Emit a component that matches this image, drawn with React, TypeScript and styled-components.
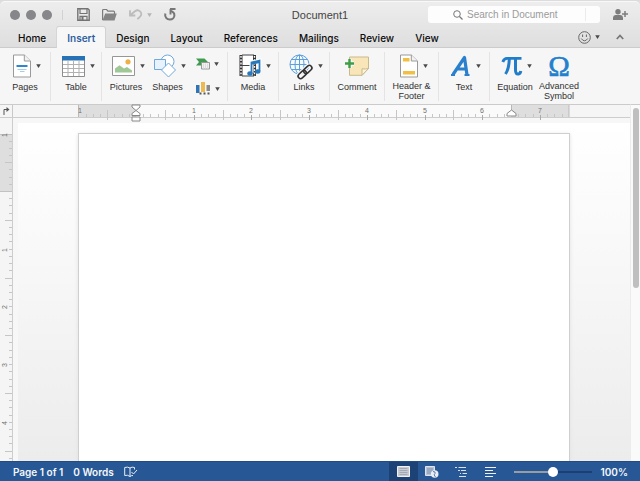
import React from "react";
import styled, { createGlobalStyle } from "styled-components";

const GlobalStyle = createGlobalStyle`
  * { box-sizing: border-box; }
  html, body { margin: 0; height: 100%; }
  body { font-family: "Liberation Sans", Arial, sans-serif; color: #222; background: #dedede; overflow: hidden; }
  button, input, textarea { font: inherit; color: inherit; margin: 0; padding: 0; border: 0; background: none; }
  button { cursor: pointer; }
  svg { display: block; flex: none; overflow: visible; }
`;

const Window = styled.div`
  display: flex;
  flex-direction: column;
  height: 100vh;
  border-top: 1px solid #dcdcdc;
`;

const Chrome = styled.header`
  flex: none;
  border-top: 1px solid #f8f8f8;
  border-radius: 5px 5px 0 0;
  background: linear-gradient(#ededed, #dedede);
`;

const TitleBar = styled.div`
  display: grid;
  grid-template-columns: 1fr auto 1fr;
  align-items: center;
  height: 25px;
`;

const TitleLeft = styled.div`
  display: flex;
  align-items: center;
  padding-left: 10px;
`;

const Lights = styled.div`
  display: flex;
  gap: 6px;
  padding-right: 10px;
  margin-right: 14px;
  border-right: 1px solid #d2d2d2;
`;

const Light = styled.button`
  width: 10px;
  height: 10px;
  border-radius: 50%;
  background: #87878b;
`;

const ToolRow = styled.div`
  display: flex;
  align-items: center;
  gap: 12px;
`;

const IconButton = styled.button`
  display: flex;
  align-items: center;
  gap: 4px;
`;

const DocTitle = styled.h1`
  margin: 0;
  font-size: 11px;
  line-height: 14px;
  font-weight: 400;
  color: #444;
`;

const TitleRight = styled.div`
  display: flex;
  align-items: center;
  justify-content: flex-end;
  gap: 13px;
  padding-right: 12px;
`;

const SearchBox = styled.label`
  display: flex;
  align-items: center;
  justify-content: center;
  gap: 4px;
  width: 172px;
  height: 17px;
  padding: 0 14px 0 25px;
  border-radius: 3px;
  background: #fdfdfd;
`;

const SearchInput = styled.input`
  flex: 1;
  min-width: 0;
  height: 13px;
  font-size: 10px;
  outline: none;
  border-right: 1px solid #ececec;
  &::placeholder { color: #9b9b9b; opacity: 1; }
`;

const TabBar = styled.nav`
  display: flex;
  height: 21px;
  padding: 0 16px 0 8px;
  gap: 1px;
  border-bottom: 1px solid #cccccc;
`;

const Tab = styled.button<{ $active?: boolean }>`
  height: 21px;
  padding: 0 10px;
  font-family: Inter, "Liberation Sans", sans-serif;
  font-size: 10px;
  font-weight: ${(p) => (p.$active ? 600 : 500)};
  color: ${(p) => (p.$active ? "#2f5f9f" : "#0c0c0c")};
  background: ${(p) => (p.$active ? "#f7f7f7" : "transparent")};
  box-shadow: ${(p) => (p.$active ? "0 0 0 1px #d2d2d2" : "none")};
  clip-path: ${(p) => (p.$active ? "inset(-1px -1px 0 -1px)" : "none")};
  border-radius: 2px 2px 0 0;
`;

const TabTools = styled.div`
  display: flex;
  align-items: center;
  gap: 16px;
  margin-left: auto;
`;

const Ribbon = styled.div`
  display: flex;
  flex: none;
  height: 56px;
  padding-top: 4px;
  background: #f6f6f6;
`;

const Group = styled.div<{ $width: number; $last?: boolean }>`
  display: flex;
  flex: none;
  justify-content: center;
  width: ${(p) => p.$width}px;
  height: 49px;
  border-right: ${(p) => (p.$last ? "0" : "1px solid #e4e4e4")};
`;

const RibbonButton = styled.button<{ $width: number }>`
  display: flex;
  flex-direction: column;
  align-items: center;
  flex: none;
  width: ${(p) => p.$width}px;
`;

const IconRow = styled.span<{ $caret?: boolean }>`
  display: grid;
  grid-template-columns: minmax(0, 1fr) auto minmax(0, 1fr);
  align-items: center;
  width: 100%;
  height: 28px;
  padding-right: ${(p) => (p.$caret ? 6 : 0)}px;
  & > :first-child { grid-column: 2; }
`;

const CaretSlot = styled.span`
  padding-left: 5px;
`;

const Label = styled.span`
  margin-top: 2px;
  font-size: 9px;
  line-height: 10px;
  color: #303030;
  text-align: center;
`;

const SmallColumn = styled.div`
  display: flex;
  flex-direction: column;
  gap: 12px;
  width: 36px;
  padding: 6px 0 0 8px;
`;

const Main = styled.main`
  display: flex;
  flex: 1;
  min-height: 0;
`;

const Editor = styled.div`
  display: flex;
  flex-direction: column;
  flex: 1;
  min-width: 0;
`;

const RulerRow = styled.div`
  display: flex;
  flex: none;
  height: 14px;
  border-top: 1px solid #cbcbcb;
  border-bottom: 1px solid #cdcdcd;
  background: #f5f5f5;
`;

const Corner = styled.button`
  display: flex;
  align-items: center;
  width: 13px;
  padding-left: 3px;
  border-right: 1px solid #c8c8c8;
`;

const HorizontalTrack = styled.div`
  display: flex;
  flex: 1;
  justify-content: center;
  padding-left: 5px;
  z-index: 1;
`;

const Body = styled.div`
  display: flex;
  flex: 1;
  min-height: 0;
`;

const VerticalTrack = styled.div`
  flex: none;
  width: 13px;
  overflow: hidden;
  border-right: 1px solid #cdcdcd;
  background: #f5f5f5;
`;

const Desk = styled.div`
  display: flex;
  flex: 1;
  min-width: 0;
  padding: 5px 0 0 5px;
  background: #f7f7f7;
`;

const DeskSurface = styled.div`
  display: flex;
  flex: 1;
  justify-content: center;
  min-width: 0;
  padding-top: 10px;
  overflow: hidden;
  background: linear-gradient(#ffffff, #fafafa 30%, #ececec);
`;

const Paper = styled.textarea`
  width: 492px;
  height: 100%;
  padding: 56px 58px;
  resize: none;
  outline: none;
  border: 1px solid #cfcfcf;
  border-bottom: 0;
  background: #fff;
  box-shadow: 0 1px 4px #e2e2e2;
`;

const ScrollTrack = styled.div`
  flex: none;
  width: 10px;
  padding: 3px 1px 0 2px;
  border-top: 1px solid #cbcbcb;
  border-left: 1px solid #ececec;
  background: #fafafa;
`;

const ScrollThumb = styled.div`
  height: 51%;
  width: 6px;
  border-radius: 3px;
  background: #bfbfbf;
`;

const StatusBar = styled.footer`
  display: flex;
  flex: none;
  align-items: center;
  height: 20px;
  padding: 0 12px 0 13px;
  border-top: 1px solid #1f4b86;
  font-family: Inter, "Liberation Sans", sans-serif;
  font-size: 10px;
  font-weight: 600;
  color: #f4f7fb;
  background: #275895;
`;

const StatusText = styled.button`
  margin-right: 10px;
`;

const Views = styled.div`
  display: flex;
  height: 100%;
  margin-left: auto;
`;

const ViewButton = styled.button<{ $active?: boolean }>`
  display: grid;
  place-items: center;
  width: 29px;
  background: ${(p) => (p.$active ? "#1d4275" : "transparent")};
`;

const Zoom = styled.input`
  width: 78px;
  height: 12px;
  margin: 0 9px 0 9px;
  appearance: none;
  &::-webkit-slider-runnable-track {
    height: 2px;
    background: linear-gradient(90deg, #9a9ca0 50%, #1b3f70 50%);
  }
  &::-webkit-slider-thumb {
    appearance: none;
    width: 10px;
    height: 10px;
    margin-top: -4px;
    border-radius: 50%;
    background: #fff;
  }
`;

const Caret = ({ color = "#4a4a4a" }: { color?: string }) => (
  <svg width="5" height="4" viewBox="0 0 5 4"><path d="M.2.200h4.600L2.500 4z" fill={color} /></svg>
);

const SaveIcon = () => (
  <svg width="13" height="13" viewBox="0 0 13 13">
    <path d="M.8.8h10l1.400 1.300v10.100H.8z" fill="none" stroke="#737373" strokeWidth="1.400" />
    <path d="M3 1v4.500h7V1M3 12V8.400h7V12" fill="none" stroke="#737373" strokeWidth="1.200" />
    <path d="M4.500 9h2v3h-2z" fill="#737373" />
  </svg>
);

const FolderIcon = () => (
  <svg width="15" height="12" viewBox="0 0 15 12">
    <path d="M.6 11V1.500q0-1 1-1h3l1.300 1.600h5.600q1 0 1 1V5" fill="none" stroke="#7b7b7b" strokeWidth="1.200" />
    <path d="M3.200 4.500h11.600L12.500 11.500H.5z" fill="#858585" />
  </svg>
);

const UndoIcon = () => (
  <svg width="14" height="11" viewBox="0 0 14 11">
    <path d="M1 1.200v5.300h5.300M1.400 6L6 2.200c3-2.200 6.300 0 6.300 2.800 0 2.300-1.800 3.500-4 5" fill="none" stroke="#bcbcbc" strokeWidth="1.800" />
  </svg>
);

const RedoIcon = () => (
  <svg width="12" height="13" viewBox="0 0 12 13">
    <path d="M1.300 5.500c-.8 3.500 1.500 6 4.500 6 2.800 0 4.600-2 4.600-4.300 0-2.200-1.600-3.600-3.800-4.200" fill="none" stroke="#777" strokeWidth="2" />
    <path d="M6 1h5.500M6.500 1v5.500" stroke="#777" strokeWidth="1.900" />
  </svg>
);

const SearchIcon = () => (
  <svg width="10" height="10" viewBox="0 0 10 10">
    <circle cx="4" cy="4" r="3.300" fill="none" stroke="#777" strokeWidth="1" />
    <path d="M6.500 6.500l3 3" stroke="#777" strokeWidth="1.200" />
  </svg>
);

const PersonIcon = () => (
  <svg width="15" height="11" viewBox="0 0 15 11">
    <circle cx="5" cy="2.800" r="2.700" fill="#7d7d7d" />
    <path d="M0 11V8.500Q0 6.200 2.500 6H7.500Q10 6.200 10 8.500V11z" fill="#7d7d7d" />
    <path d="M12 2v6M9 5h6" stroke="#7d7d7d" strokeWidth="1.500" />
  </svg>
);

const SmileIcon = () => (
  <svg width="13" height="13" viewBox="0 0 13 13">
    <circle cx="6.500" cy="6.500" r="5.800" fill="none" stroke="#666" />
    <path d="M4.600 3.500v2.500M8.400 3.500v2.500M3.200 7.500q3.300 4.600 6.600 0" fill="none" stroke="#666" />
  </svg>
);

const CollapseIcon = () => (
  <svg width="8" height="6" viewBox="0 0 8 6"><path d="M.8 5L4 1.500 7.200 5" fill="none" stroke="#777" strokeWidth="1.800" /></svg>
);

const PagesIcon = () => (
  <svg width="18" height="24" viewBox="0 0 18 24">
    <path d="M.5 1h10.800L17.500 7v16H.5z" fill="#fff" stroke="#9a9a9a" />
    <path d="M11.300 1v6h6.200" fill="#f2f2f2" stroke="#9a9a9a" />
    <path d="M3.500 12h11" stroke="#2f86cf" strokeWidth="2" />
    <path d="M4.500 15.500h9M7 17.500h4.500" stroke="#a8cbe9" />
  </svg>
);

const TableIcon = () => (
  <svg width="23" height="21" viewBox="0 0 23 21">
    <path d="M.5.5h22v20H.5z" fill="#fff" stroke="#8d8d8d" />
    <path d="M0 0h23v4.500H0z" fill="#2672b5" />
    <path d="M6 4.500V20M11.500 4.500V20M17 4.500V20M1 8.500h21M1 12.500h21M1 16.500h21" stroke="#b1b1b1" />
  </svg>
);

const PicturesIcon = () => (
  <svg width="23" height="20" viewBox="0 0 23 20">
    <path d="M.5.5h22v19H.5z" fill="#fff" stroke="#969696" />
    <path d="M3 16.500v-4l4.500-3.300L12 12.500l3-1.500 5 3.500v2z" fill="#9fc896" />
    <circle cx="16" cy="5.800" r="2.600" fill="#eeb14a" />
  </svg>
);

const ShapesIcon = () => (
  <svg width="22" height="24" viewBox="0 0 22 24">
    <circle cx="13.500" cy="7.500" r="6.500" fill="#fff" stroke="#70a8dc" />
    <path d="M.5 5.500h11v10H.5z" fill="#e8f2fc" stroke="#70a8dc" />
    <path d="M14.500 9l7 7-7 7-7-7z" fill="#fff" stroke="#70a8dc" />
  </svg>
);

const SmartArtIcon = () => (
  <svg width="14" height="12" viewBox="0 0 14 12">
    <path d="M0 .500h8.500L12 4 8.500 7.500H0L3 4z" fill="#409b50" />
    <path d="M5.500 4.500h8v6.500h-8z" fill="#f1f1f1" stroke="#999" />
    <path d="M7.500 5.500v5M9.500 5.500v5M11.500 5.500v5" stroke="#ddd" />
  </svg>
);

const ChartIcon = () => (
  <svg width="15" height="13" viewBox="0 0 15 13">
    <path d="M0 3h3.500v8H0z" fill="#2e75b8" />
    <path d="M5 0h4v10H5z" fill="#eeb94e" />
    <path d="M10.500 3h3.500v6h-3.500z" fill="#8a8a8a" />
    <path d="M3.500 11.500h2M7.500 11.500h2M11.500 11.500h2" stroke="#555" strokeWidth="2" />
  </svg>
);

const MediaIcon = () => (
  <svg width="22" height="24" viewBox="0 0 22 24">
    <path d="M1 1.500h16v20H1z" fill="#fff" />
    <path d="M2 1v21M15.500 1v21" stroke="#333" strokeWidth="3" />
    <path d="M2 2v20M15.500 2v20" stroke="#fff" strokeWidth="1.400" strokeDasharray="1.800 1.500" />
    <path d="M3 1h12M3 11.500h12M3 22h12" stroke="#444" />
    <path d="M12.500 19V8.500l8-1.800v10" fill="none" stroke="#fff" strokeWidth="4" />
    <path d="M12.500 19.500V8.500l8-1.800v10.500M12.500 9.800l8-1.800" fill="none" stroke="#2878bd" strokeWidth="1.800" />
    <ellipse cx="11" cy="19.500" rx="2.700" ry="2.200" fill="#2878bd" />
    <ellipse cx="18.700" cy="17.500" rx="2.700" ry="2.200" fill="#2878bd" />
  </svg>
);

const LinksIcon = () => (
  <svg width="24" height="24" viewBox="0 0 24 24">
    <g fill="none" stroke="#5d9fd8">
      <circle cx="10.500" cy="10.500" r="9.500" fill="#f4faff" />
      <ellipse cx="10.500" cy="10.500" rx="4.500" ry="9.500" />
      <path d="M10.500 1v19M1 10.500h19M2.500 5.500h16M2.500 15.500h16" />
    </g>
    <g fill="none" transform="rotate(-43 16 18)">
      <rect x="7.500" y="15.500" width="9.500" height="5" rx="2.500" stroke="#f6f6f6" strokeWidth="4" />
      <rect x="15" y="15.500" width="9.500" height="5" rx="2.500" stroke="#f6f6f6" strokeWidth="4" />
      <rect x="7.500" y="15.500" width="9.500" height="5" rx="2.500" stroke="#333" strokeWidth="1.600" />
      <rect x="15" y="15.500" width="9.500" height="5" rx="2.500" stroke="#333" strokeWidth="1.600" />
    </g>
  </svg>
);

const CommentIcon = () => (
  <svg width="24" height="20" viewBox="0 0 24 20">
    <path d="M4.500 1h19v11.500l-6.500 6.800H4.500z" fill="#f8e6b8" stroke="#c9b98f" />
    <path d="M17 19.300v-6.500q3.500.5 6.500-.3z" fill="#fdf3d6" stroke="#c9b98f" />
    <path d="M4.500 3v9M0 7.500h9" stroke="#f6f6f6" strokeWidth="5" />
    <path d="M4.500 3v9M0 7.500h9" stroke="#3f9d49" strokeWidth="2.400" />
  </svg>
);

const HeaderIcon = () => (
  <svg width="18" height="24" viewBox="0 0 18 24">
    <path d="M.5 1h10.800L17.500 7v16H.5z" fill="#fff" stroke="#999" />
    <path d="M11.300 1v6h6.200" fill="#f2f2f2" stroke="#999" />
    <path d="M3 4h6.500v3.500H3zM3 17h12v3.500H3z" fill="#f3bf43" />
  </svg>
);

const TextIcon = () => (
  <svg width="20" height="24" viewBox="0 0 20 24">
    <path d="M2 20.500L13.500 3.500l2.500 17.500M6 15h9" fill="none" stroke="#2a80cc" strokeWidth="3.200" strokeLinejoin="round" />
    <path d="M0 21h4M13.500 21h5" stroke="#2a80cc" strokeWidth="2" />
  </svg>
);

const PiIcon = () => (
  <svg width="20" height="20" viewBox="0 0 20 20">
    <path d="M.8 6Q2 2.400 5 2.400h14.500" fill="none" stroke="#217dca" strokeWidth="2.800" />
    <path d="M7.300 3Q7 13 3.500 18M13.500 3V14q0 4.500 3 4 1.800-.3 2.300-3" fill="none" stroke="#217dca" strokeWidth="3" />
  </svg>
);

const OmegaIcon = () => (
  <svg width="20" height="22" viewBox="0 0 20 22" fontFamily="Liberation Serif, serif" textAnchor="middle">
    <text x="10" y="21" fontSize="29" fill="#2380cc" stroke="#2380cc" strokeWidth=".6">Ω</text>
  </svg>
);

const TabStopIcon = () => (
  <svg width="7" height="8" viewBox="0 0 7 8"><path d="M1 8V2.500h3" fill="none" stroke="#555" /><path d="M3.500 0L6.500 2.500l-3 2.500z" fill="#555" /></svg>
);

const ProofIcon = () => (
  <svg width="13" height="12" viewBox="0 0 13 12">
    <path d="M6 2Q3.500.5.700 1.500v8Q3.500 8.500 6 10.500zM6 2q2-1.500 4.500-.5v2M6 10.500q1.500-1.200 3-1" fill="none" stroke="#e8eef7" />
    <path d="M7.500 6l2 2L13 4" fill="none" stroke="#e8eef7" />
  </svg>
);

const PrintViewIcon = () => (
  <svg width="13" height="11" viewBox="0 0 13 11">
    <path d="M.5.500h12v10H.5z" fill="#c8cbd1" stroke="#f2f2f2" />
    <path d="M2.500 2.500h8M2.500 4.500h8M2.500 6.500h8M2.500 8.500h8" stroke="#a4aab5" />
  </svg>
);

const WebViewIcon = () => (
  <svg width="14" height="12" viewBox="0 0 14 12">
    <path d="M.5.500h9v9h-9z" fill="#b8c2d2" stroke="#dfe4ec" />
    <path d="M2 3h6M2 5h6M2 7h4" stroke="#7990b3" />
    <circle cx="9.700" cy="8" r="3.800" fill="#e9edf4" />
    <path d="M8 5.500q3 0 2 2-2 1 .5 3.500" fill="none" stroke="#5f7ca9" />
  </svg>
);

const OutlineIcon = () => (
  <svg width="12" height="10" viewBox="0 0 12 10">
    <path d="M0 .5h2M3.500.5H11M3 3.500h2M6 3.500h5M5 6.500h1M7.500 6.500H12M4 9.500h7" stroke="#d8e1ee" />
  </svg>
);

const DraftIcon = () => (
  <svg width="11" height="10" viewBox="0 0 11 10">
    <path d="M0 .5h11M0 3.500h8M0 6.500h11M0 9.500h8" stroke="#edf1f7" />
  </svg>
);

const INCH = 57.7;

const HorizontalRuler = () => {
  const marks = Array.from({ length: 69 }, (_, i) => i - 8).filter((i) => i > -8 && i < 60 && i !== 0 && i !== 52);
  return (
    <svg width="492" height="12" viewBox="0 0 492 12" fontSize="7" textAnchor="middle">
      <rect width="492" height="12" fill="#fafafa" />
      <rect width="58" height="12" fill="#dedede" />
      <rect x="433" width="58" height="12" fill="#dedede" />
      <path d="M.5 0v12M491 0v12M433.500 0v6" stroke="#b8b8b8" />
      {marks.map((i) => {
        const x = Math.round(58 + (i * INCH) / 8);
        if (i % 8 === 0) {
          return (
            <g key={i}>
              <path d={`M${x}.5 10v5`} stroke="#aaa" />
              <text x={x} y="8" fill="#707070">{i / 8}</text>
            </g>
          );
        }
        return <path key={i} d={i % 4 === 0 ? `M${x}.5 5v10` : `M${x}.5 9v3`} stroke="#c6c6c6" />;
      })}
      <text x="2" y="8" fill="#707070">1</text>
      <g fill="#fff" stroke="#898989">
        <path d="M54 0h8v2l-4 3.500L54 2zM58 5.500l4 3v2h-8v-2zM54 12h8v4h-8z" />
        <path d="M433.500 5l4.500 3.500v2.500h-9V8.500z" />
      </g>
    </svg>
  );
};

const VerticalRuler = () => {
  const marks = Array.from({ length: 46 }, (_, i) => i - 7).filter((i) => i !== 0);
  return (
    <svg width="12" height="343" viewBox="0 0 12 343" fontSize="7" textAnchor="middle">
      <rect y="16" width="12" height="58" fill="#dedede" />
      <path d="M0 16.500h12M0 73.500h12" stroke="#c2c2c2" />
      <text transform="translate(7 17) rotate(-90)" fill="#666">1</text>
      {marks.map((i) => {
        const y = Math.round(73 + (i * INCH) / 8);
        return (
          <g key={i}>
            <path d={i % 8 !== 0 && i % 4 === 0 ? `M5 ${y}.5h7` : `M9 ${y}.5h3`} stroke="#c6c6c6" />
            {i % 8 === 0 && <text transform={`translate(7 ${y + 1}) rotate(-90)`} fill="#707070">{i / 8}</text>}
          </g>
        );
      })}
    </svg>
  );
};

type ActionProps = { icon: React.ReactNode; label: React.ReactNode; width?: number; caret?: boolean };

const Action = ({ icon, label, width = 48, caret = true }: ActionProps) => (
  <RibbonButton $width={width}>
    <IconRow $caret={caret}>
      {icon}
      {caret && <CaretSlot><Caret /></CaretSlot>}
    </IconRow>
    <Label>{label}</Label>
  </RibbonButton>
);

const tabs = ["Home", "Insert", "Design", "Layout", "References", "Mailings", "Review", "View"];

export default function App() {
  return (
    <>
      <GlobalStyle />
      <Window>
        <Chrome>
          <TitleBar>
            <TitleLeft>
              <Lights>
                <Light aria-label="Close" />
                <Light aria-label="Minimize" />
                <Light aria-label="Full screen" />
              </Lights>
              <ToolRow>
                <IconButton aria-label="Save"><SaveIcon /></IconButton>
                <IconButton aria-label="Open"><FolderIcon /></IconButton>
                <IconButton aria-label="Undo"><UndoIcon /><Caret color="#b4b4b4" /></IconButton>
                <IconButton aria-label="Repeat"><RedoIcon /></IconButton>
              </ToolRow>
            </TitleLeft>
            <DocTitle>Document1</DocTitle>
            <TitleRight>
              <SearchBox>
                <SearchIcon />
                <SearchInput type="text" placeholder="Search in Document" aria-label="Search in Document" />
              </SearchBox>
              <IconButton aria-label="Share"><PersonIcon /></IconButton>
            </TitleRight>
          </TitleBar>
          <TabBar>
            {tabs.map((name) => <Tab key={name} $active={name === "Insert"}>{name}</Tab>)}
            <TabTools>
              <IconButton aria-label="Feedback"><SmileIcon /><Caret /></IconButton>
              <IconButton aria-label="Collapse ribbon"><CollapseIcon /></IconButton>
            </TabTools>
          </TabBar>
        </Chrome>

        <Ribbon>
          <Group $width={51}><Action icon={<PagesIcon />} label="Pages" /></Group>
          <Group $width={51}><Action icon={<TableIcon />} label="Table" /></Group>
          <Group $width={126}>
            <Action icon={<PicturesIcon />} label="Pictures" width={42} />
            <Action icon={<ShapesIcon />} label="Shapes" width={41} />
            <SmallColumn>
              <IconButton aria-label="SmartArt"><SmartArtIcon /><Caret /></IconButton>
              <IconButton aria-label="Chart"><ChartIcon /><Caret /></IconButton>
            </SmallColumn>
          </Group>
          <Group $width={51}><Action icon={<MediaIcon />} label="Media" /></Group>
          <Group $width={51}><Action icon={<LinksIcon />} label="Links" /></Group>
          <Group $width={55}><Action icon={<CommentIcon />} label="Comment" caret={false} /></Group>
          <Group $width={54}><Action icon={<HeaderIcon />} label={<>Header &amp;<br />Footer</>} /></Group>
          <Group $width={51}><Action icon={<TextIcon />} label="Text" /></Group>
          <Group $width={94} $last>
            <Action icon={<PiIcon />} label="Equation" width={44} />
            <Action icon={<OmegaIcon />} label={<>Advanced<br />Symbol</>} width={44} caret={false} />
          </Group>
        </Ribbon>

        <Main>
          <Editor>
            <RulerRow>
              <Corner aria-label="Tab stop"><TabStopIcon /></Corner>
              <HorizontalTrack><HorizontalRuler /></HorizontalTrack>
            </RulerRow>
            <Body>
              <VerticalTrack><VerticalRuler /></VerticalTrack>
              <Desk>
                <DeskSurface><Paper aria-label="Document text" spellCheck={false} /></DeskSurface>
              </Desk>
            </Body>
          </Editor>
          <ScrollTrack><ScrollThumb /></ScrollTrack>
        </Main>

        <StatusBar>
          <StatusText>Page 1 of 1</StatusText>
          <StatusText>0 Words</StatusText>
          <IconButton aria-label="Spelling"><ProofIcon /></IconButton>
          <Views>
            <ViewButton $active aria-label="Print layout"><PrintViewIcon /></ViewButton>
            <ViewButton aria-label="Web layout"><WebViewIcon /></ViewButton>
            <ViewButton aria-label="Outline"><OutlineIcon /></ViewButton>
            <ViewButton aria-label="Draft"><DraftIcon /></ViewButton>
          </Views>
          <Zoom type="range" min={0} max={100} defaultValue={50} aria-label="Zoom" />
          <span>100%</span>
        </StatusBar>
      </Window>
    </>
  );
}
